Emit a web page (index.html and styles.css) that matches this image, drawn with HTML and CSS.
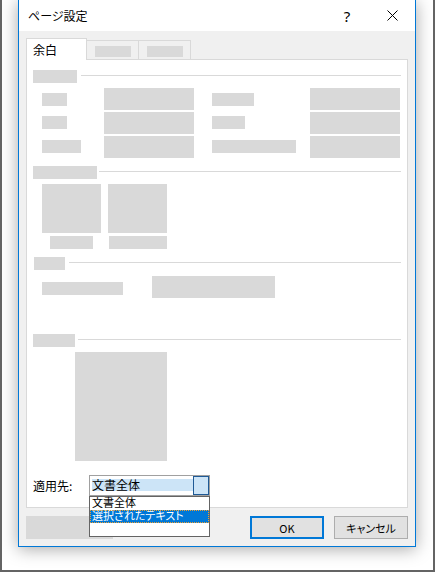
FILE: index.html
```html
<!DOCTYPE html>
<html>
<head>
    <title>ページ設定</title>
    <link rel="stylesheet" href="styles.css">
</head>
<body>
    <div class="screen">
        <div class="window">
            <div class="titlebar">
                <span class="title">ページ設定</span>
                <span class="cap-btn help">?</span>
                <span class="cap-btn close">
                    <svg width="11" height="11" viewBox="0 0 11 11">
                        <path d="M0.5 0.5 L10.5 10.5 M10.5 0.5 L0.5 10.5" stroke="#000" stroke-width="1" fill="none"/>
                    </svg>
                </span>
            </div>

            <div class="dlg-body">
                <div class="tabs">
                    <div class="tab active">余白</div>
                    <div class="tab"><span class="ph tab-ph"></span></div>
                    <div class="tab"><span class="ph tab-ph"></span></div>
                </div>

                <div class="panel">
                    <!-- margins -->
                    <div class="group-head">
                        <span class="ph w44"></span><span class="rule"></span>
                    </div>
                    <div class="field-grid">
                        <span class="ph lbl w25 top5"></span>
                        <span class="ph input"></span>
                        <span class="ph lbl right w42 top5"></span>
                        <span class="ph input"></span>

                        <span class="ph lbl w25"></span>
                        <span class="ph input"></span>
                        <span class="ph lbl right w33"></span>
                        <span class="ph input"></span>

                        <span class="ph lbl w39"></span>
                        <span class="ph input"></span>
                        <span class="ph lbl right w84"></span>
                        <span class="ph input"></span>
                    </div>

                    <!-- orientation -->
                    <div class="group-head gap8">
                        <span class="ph w64"></span><span class="rule near"></span>
                    </div>
                    <div class="thumbs">
                        <div class="thumb">
                            <span class="ph thumb-img"></span>
                            <span class="ph caption w43"></span>
                        </div>
                        <div class="thumb">
                            <span class="ph thumb-img"></span>
                            <span class="ph caption w58"></span>
                        </div>
                    </div>

                    <!-- pages -->
                    <div class="group-head gap8 shift1">
                        <span class="ph w31"></span><span class="rule"></span>
                    </div>
                    <div class="page-row">
                        <span class="ph page-lbl"></span>
                        <span class="ph page-input"></span>
                    </div>

                    <!-- preview -->
                    <div class="group-head gap36">
                        <span class="ph w42"></span><span class="rule close3"></span>
                    </div>
                    <span class="ph preview"></span>

                    <div class="apply-row">
                        <span class="apply-lbl">適用先:</span>
                        <div class="combo">
                            <span class="combo-val">文書全体</span>
                            <span class="combo-btn"></span>
                            <ul class="combo-list">
                                <li>文書全体</li>
                                <li class="selected">選択されたテキスト</li>
                                <li></li>
                            </ul>
                        </div>
                    </div>
                </div>

                <div class="footer">
                    <span class="ph footer-ph"></span>
                    <button class="btn default">OK</button>
                    <button class="btn">キャンセル</button>
                </div>
            </div>
        </div>
    </div>
</body>
</html>
```

FILE: styles.css
```css
body {
    margin: 0;
    background: #fff;
    font-family: "Noto Sans CJK JP", "Noto Sans", sans-serif;
    font-size: 12px;
    font-feature-settings: "palt";
    color: #000;
}
.screen {
    width: 435px;
    height: 572px;
    box-sizing: border-box;
    border: 2px solid #646464;
    border-top: 0;
    background: #fff;
    overflow: hidden;
}
.window {
    width: 398px;
    height: 547px;
    box-sizing: border-box;
    margin-left: 16px;
    border: 1px solid #0078d7;
    border-top: 0;
    background: #f0f0f0;
    box-shadow: 0 2px 16px rgba(0,0,0,0.35);
    display: flex;
    flex-direction: column;
}
.titlebar {
    height: 31px;
    flex: none;
    background: #fff;
    display: flex;
    align-items: center;
    padding-left: 9px;
}
.title {
    flex: 1;
    font-size: 12px;
}
.cap-btn {
    width: 46px;
    height: 31px;
    display: flex;
    align-items: center;
    justify-content: center;
}
.help {
    font-family: "Noto Sans", sans-serif;
    font-size: 15px;
    padding-left: 2px;
    box-sizing: border-box;
}
.dlg-body {
    flex: 1;
    padding: 7px 7px 7px 7px;
    display: flex;
    flex-direction: column;
}

/* placeholders */
.ph {
    display: block;
    background: #d9d9d9;
}

/* tabs */
.tabs {
    display: flex;
    align-items: flex-end;
    height: 22px;
    margin-bottom: -1px;
    position: relative;
    z-index: 1;
}
.tab {
    box-sizing: border-box;
    width: 52px;
    height: 19px;
    margin-bottom: 1px;
    border-top: 1px solid #d9d9d9;
    border-right: 1px solid #d9d9d9;
    padding: 5px 0 0 8px;
}
.tab.active {
    width: 61px;
    height: 22px;
    margin-bottom: 0;
    border: 1px solid #d9d9d9;
    border-bottom: 0;
    background: #fff;
    padding: 1px 0 0 6px;
    line-height: 20px;
}
.tab-ph {
    width: 36px;
    height: 11px;
}

/* panel */
.panel {
    border: 1px solid #d9d9d9;
    background: #fff;
    padding: 10px 6px 11px 6px;
}
.group-head {
    display: flex;
    height: 13px;
}
.group-head .ph {
    height: 13px;
}
.rule {
    flex: 1;
    height: 1px;
    margin: 5px 0 0 4px;
    background: #d9d9d9;
}
.rule.near { margin-left: 2px; }
.rule.close3 { margin-left: 3px; }
.gap8 { margin-top: 8px; }
.gap36 { margin-top: 36px; }
.shift1 { margin-left: 1px; }

.w25 { width: 25px; }
.w31 { width: 31px; }
.w33 { width: 33px; }
.w39 { width: 39px; }
.w42 { width: 42px; }
.w43 { width: 43px; }
.w44 { width: 44px; }
.w58 { width: 58px; }
.w64 { width: 64px; }
.w84 { width: 84px; }

.field-grid {
    display: grid;
    grid-template-columns: 62px 90px 116px 90px;
    row-gap: 2px;
    margin: 5px 0 0 9px;
}
.field-grid .lbl {
    height: 13px;
    align-self: start;
    margin-top: 4px;
}
.field-grid .lbl.top5 { margin-top: 5px; }
.field-grid .lbl.right { margin-left: 18px; }
.field-grid .input {
    height: 22px;
}

.thumbs {
    display: flex;
    gap: 7px;
    margin: 5px 0 0 9px;
}
.thumb {
    width: 59px;
    display: flex;
    flex-direction: column;
    align-items: center;
}
.thumb-img {
    width: 59px;
    height: 49px;
}
.caption {
    height: 13px;
    margin-top: 3px;
}

.page-row {
    display: flex;
    margin: 6px 0 0 9px;
}
.page-lbl {
    width: 81px;
    height: 13px;
    margin-top: 6px;
}
.page-input {
    width: 123px;
    height: 22px;
    margin-left: 29px;
}

.preview {
    width: 92px;
    height: 109px;
    margin: 5px 0 0 42px;
}

/* apply to */
.apply-row {
    display: flex;
    align-items: center;
    margin-top: 14px;
}
.apply-lbl {
    width: 56px;
    font-size: 12px;
    line-height: 21px;
}
.combo {
    position: relative;
    width: 121px;
    height: 21px;
    box-sizing: border-box;
    border: 1px solid #a0a0a0;
    display: flex;
}
.combo-val {
    flex: 1;
    height: 12px;
    margin: 3px 0 0 2px;
    background: #cce4f7;
    line-height: 12px;
    font-size: 12px;
}
.combo-btn {
    width: 16px;
    height: 19px;
    box-sizing: border-box;
    border: 1px solid #1f5a96;
    background: #cce4f7;
}
.combo-list {
    position: absolute;
    top: 20px;
    left: -1px;
    width: 121px;
    height: 41px;
    box-sizing: border-box;
    margin: 0;
    padding: 0;
    list-style: none;
    border: 1px solid #646464;
    background: #fff;
    z-index: 2;
}
.combo-list li {
    height: 13px;
    line-height: 13px;
    padding-left: 2px;
    font-family: "Liberation Sans", "Noto Sans CJK JP", sans-serif;
    font-size: 11px;
}
.combo-list li.selected {
    background: #0078d7;
    color: #fff;
    outline: 1px dotted #f0a030;
    outline-offset: -1px;
}

/* footer */
.footer {
    display: flex;
    height: 23px;
    margin-top: 8px;
}
.footer-ph {
    width: 87px;
}
.btn {
    width: 74px;
    height: 23px;
    box-sizing: border-box;
    margin-left: 10px;
    padding: 0;
    border: 1px solid #adadad;
    background: #e1e1e1;
    font-family: "Noto Sans CJK JP", "Noto Sans", sans-serif;
    font-size: 11px;
    font-feature-settings: "palt";
    color: #000;
}
.btn.default {
    margin-left: auto;
    border: 2px solid #0078d7;
}
```
